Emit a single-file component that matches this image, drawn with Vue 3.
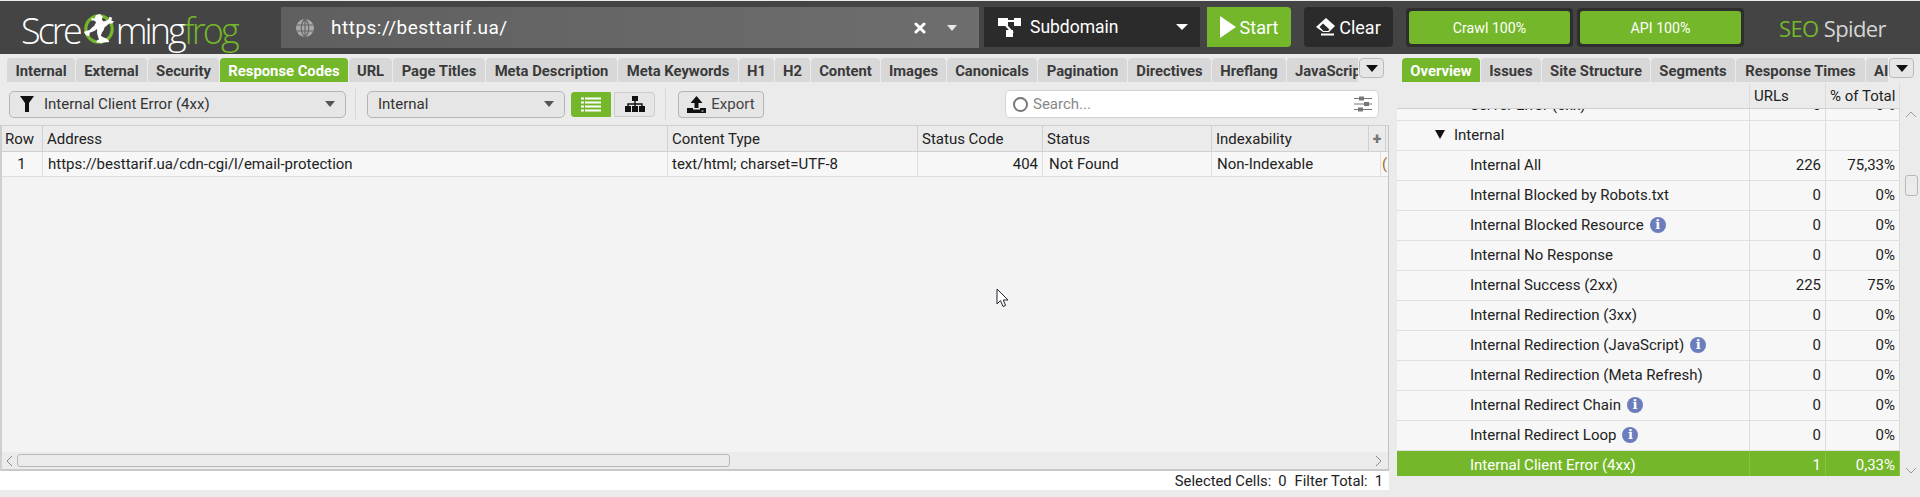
<script setup>
const leftTabs = [
  ['Internal', 68], ['External', 71], ['Security', 71], ['Response Codes', 128], ['URL', 43], ['Page Titles', 92],
  ['Meta Description', 131], ['Meta Keywords', 120], ['H1', 35], ['H2', 35], ['Content', 69], ['Images', 65],
  ['Canonicals', 90], ['Pagination', 89], ['Directives', 83], ['Hreflang', 74], ['JavaScript', 80]
]
const rightTabs = [
  ['Overview', 78], ['Issues', 60], ['Site Structure', 108], ['Segments', 84], ['Response Times', 129], ['AI', 40]
]
const clipped = ['JavaScript', 'AI']
const rows = [
  { name: 'Server Error (5xx)', urls: '0', pct: '0%', indent: 'leaf' },
  { name: 'Internal', urls: '', pct: '', indent: 'group' },
  { name: 'Internal All', urls: '226', pct: '75,33%', indent: 'leaf' },
  { name: 'Internal Blocked by Robots.txt', urls: '0', pct: '0%', indent: 'leaf' },
  { name: 'Internal Blocked Resource', urls: '0', pct: '0%', indent: 'leaf', info: true },
  { name: 'Internal No Response', urls: '0', pct: '0%', indent: 'leaf' },
  { name: 'Internal Success (2xx)', urls: '225', pct: '75%', indent: 'leaf' },
  { name: 'Internal Redirection (3xx)', urls: '0', pct: '0%', indent: 'leaf' },
  { name: 'Internal Redirection (JavaScript)', urls: '0', pct: '0%', indent: 'leaf', info: true },
  { name: 'Internal Redirection (Meta Refresh)', urls: '0', pct: '0%', indent: 'leaf' },
  { name: 'Internal Redirect Chain', urls: '0', pct: '0%', indent: 'leaf', info: true },
  { name: 'Internal Redirect Loop', urls: '0', pct: '0%', indent: 'leaf', info: true },
  { name: 'Internal Client Error (4xx)', urls: '1', pct: '0,33%', indent: 'leaf', active: true }
]
</script>

<template>
  <div class="app">
    <header class="top">
      <div class="logo">
        <span>Scre</span>
        <svg class="frog" viewBox="0 0 34 36" width="32" height="34">
          <circle cx="17" cy="17" r="14" fill="none" stroke="#74b72a" stroke-width="3.4" />
          <path fill="#fff" d="M14 2l4-1 3 3-1 3 2 2 5-2 1-3 3 1-1 3 3 1-2 2-3 0-5 4-1 3-2 3-1 3 3 2 3 1 3 3-1 1-5 0-2 1-6-1 1-2 2-1-2-6 0-5-3 2-5 2 0 3-3 0-2-2-1-2 2-1 4-1 5-5 2-3-2-2-3 0 0-3 3 1z" />
          <circle cx="11" cy="13" r="1.2" fill="#444" />
        </svg>
        <span>ming</span><span class="logo-green">frog</span>
      </div>
      <div class="url">
        <svg class="globe" viewBox="0 0 20 20" width="20" height="20">
          <circle cx="10" cy="10" r="9" fill="#a9a9a9" />
          <path d="M1 7h18M1 13h18M10 1v18M10 1C5 6 5 14 10 19M10 1c5 5 5 13 0 18" stroke="#666" stroke-width="1.2" fill="none" />
        </svg>
        <span class="url-text">https://besttarif.ua/</span>
        <svg class="url-x" viewBox="0 0 12 12" width="12" height="12"><path d="M2 2l8 8M10 2l-8 8" stroke="#fff" stroke-width="3" stroke-linecap="round" /></svg>
        <i class="caret caret-light"></i>
      </div>
      <div class="mode">
        <svg viewBox="0 0 24 19" width="24" height="19">
          <path d="M6 3h14M5 4l10 11" stroke="#fff" stroke-width="2" />
          <rect x="0" y="0" width="10" height="8" fill="#fff" /><rect x="16" y="0" width="7" height="8" fill="#fff" /><rect x="8" y="12" width="7" height="7" fill="#fff" />
        </svg>
        <span class="mode-label">Subdomain</span>
        <i class="caret caret-white"></i>
      </div>
      <button class="start">
        <svg viewBox="0 0 16 22" width="16" height="22"><path d="M0 0l16 11L0 22z" fill="#fff" /></svg>
        Start
      </button>
      <button class="clear">
        <svg viewBox="0 0 19 18" width="19" height="18"><path d="M10 0l9 8-6 6H7L0 9z" fill="#fff" /><path d="M3.5 9l3.5-3.5 6.5 6L12 13H7.5z" fill="#2b2b2b" /><path d="M5 16.5h13" stroke="#fff" stroke-width="2" /></svg>
        Clear
      </button>
      <div class="progress"><span>Crawl 100%</span></div>
      <div class="progress api"><span>API 100%</span></div>
      <div class="brand"><span class="brand-green">SEO</span> Spider</div>
    </header>

    <main class="main">
      <section class="left">
        <nav class="tabs">
          <div class="tab-list">
            <div v-for="t in leftTabs" :key="t[0]" class="tab" :class="{ on: t[0] === 'Response Codes', clip: clipped.includes(t[0]) }" :style="{ width: t[1] + 'px' }">{{ t[0] }}</div>
          </div>
          <button class="more"><i class="caret caret-black"></i></button>
        </nav>

        <div class="toolbar">
          <div class="select filter">
            <svg viewBox="0 0 14 16" width="14" height="16"><path d="M0 0h14L9 7v9H5V7z" fill="#111" /></svg>
            <span>Internal Client Error (4xx)</span>
            <i class="caret caret-gray"></i>
          </div>
          <div class="sep"></div>
          <div class="select scope">
            <span>Internal</span>
            <i class="caret caret-gray"></i>
          </div>
          <button class="view on">
            <svg viewBox="0 0 20 15" width="20" height="15">
              <path d="M0 1.5h3M4 1.5h16M0 5.5h3M4 5.5h16M0 9.5h3M4 9.5h16M0 13.5h3M4 13.5h16" stroke="#fff" stroke-width="2.2" />
            </svg>
          </button>
          <button class="view tree">
            <svg viewBox="0 0 20 16" width="20" height="16"><rect x="7" y="0" width="6" height="5" fill="#111" /><path d="M10 5v6M3 11V8h14v3" stroke="#111" stroke-width="1.4" fill="none" /><rect x="0" y="10" width="6" height="6" fill="#111" /><rect x="7" y="10" width="6" height="6" fill="#111" /><rect x="14" y="10" width="6" height="6" fill="#111" /></svg>
          </button>
          <div class="sep sep2"></div>
          <button class="export">
            <svg viewBox="0 0 19 17" width="19" height="17"><path d="M9.5 0l6 7h-4v5h-4V7h-4z" fill="#111" /><path d="M0 12h6v1.5h7V12h6v5H0z" fill="#111" /><rect x="14.5" y="14.5" width="2" height="1" fill="#ddd" /></svg>
            Export
          </button>
          <div class="search">
            <span class="search-ring"></span>
            <span class="search-text">Search...</span>
            <svg viewBox="0 0 18 16" width="18" height="16"><path d="M0 2.5h18M0 8h18M0 13.5h18" stroke="#777" stroke-width="1" /><rect x="5" y="0.5" width="5" height="4" fill="#777" /><rect x="10" y="6" width="5" height="4" fill="#777" /><rect x="4" y="11.5" width="5" height="4" fill="#777" /></svg>
          </div>
        </div>

        <div class="grid">
          <div class="grid-head">
            <div class="th c-row">Row</div>
            <div class="th c-addr">Address</div>
            <div class="th c-type">Content Type</div>
            <div class="th c-code">Status Code</div>
            <div class="th c-status">Status</div>
            <div class="th c-index">Indexability</div>
            <div class="th c-plus">+</div>
          </div>
          <div class="grid-row">
            <div class="td c-row center">1</div>
            <div class="td c-addr">https://besttarif.ua/cdn-cgi/l/email-protection</div>
            <div class="td c-type">text/html; charset=UTF-8</div>
            <div class="td c-code end">404</div>
            <div class="td c-status">Not Found</div>
            <div class="td c-index">Non-Indexable</div>
            <div class="td c-rest">(</div>
          </div>
          <div class="grid-empty">
            <svg class="cursor" viewBox="0 0 13 20" width="13" height="20"><path d="M1 1v15l3.5-3.5L7 18.5l2.6-1.1L7.2 12H12z" fill="#fff" stroke="#223" stroke-width="1" /></svg>
          </div>
          <div class="hscroll">
            <svg viewBox="0 0 7 12" width="7" height="12"><path d="M6 1L1 6l5 5" fill="none" stroke="#888" stroke-width="1" /></svg>
            <div class="hthumb"></div>
            <svg class="hend" viewBox="0 0 7 12" width="7" height="12"><path d="M1 1l5 5-5 5" fill="none" stroke="#888" stroke-width="1" /></svg>
          </div>
        </div>
        <footer class="status">
          <span>Selected Cells:</span><span>0</span><span class="gap">Filter Total:</span><span>1</span>
        </footer>
      </section>

      <aside class="side">
        <nav class="tabs rtabs">
          <div class="tab-list">
            <div v-for="t in rightTabs" :key="t[0]" class="tab" :class="{ on: t[0] === 'Overview', clip: clipped.includes(t[0]) }" :style="{ width: t[1] + 'px' }">{{ t[0] }}</div>
          </div>
          <button class="more"><i class="caret caret-black"></i></button>
        </nav>
        <div class="ov">
          <div class="ov-table">
            <div class="ov-head">
              <div class="ov-name"></div>
              <div class="ov-urls">URLs</div>
              <div class="ov-pct">% of Total</div>
            </div>
            <div class="ov-body">
              <div class="ov-scroll">
                <div v-for="r in rows" :key="r.name" class="ov-row" :class="{ active: r.active }">
                  <div class="ov-name" :class="r.indent">
                    <i v-if="r.indent === 'group'" class="tri"></i>
                    <span>{{ r.name }}</span>
                    <span v-if="r.info" class="info">i</span>
                  </div>
                  <div class="ov-urls num">{{ r.urls }}</div>
                  <div class="ov-pct num">{{ r.pct }}</div>
                </div>
              </div>
            </div>
          </div>
          <div class="vscroll">
            <svg class="chev-up" viewBox="0 0 12 7" width="12" height="7"><path d="M1 6l5-5 5 5" fill="none" stroke="#999" stroke-width="1" /></svg>
            <div class="vthumb"></div>
            <svg class="chev-down" viewBox="0 0 12 7" width="12" height="7"><path d="M1 1l5 5 5-5" fill="none" stroke="#999" stroke-width="1" /></svg>
          </div>
        </div>
      </aside>
    </main>
  </div>
</template>

<style>
html, body { margin: 0; background: #ebebeb; overflow: hidden; }
</style>

<style scoped>
.app { width: 1920px; height: 497px; display: flex; flex-direction: column; background: #ebebeb; font-family: Roboto, "Liberation Sans", sans-serif; color: #222; overflow: hidden; }
button { font-family: inherit; padding: 0; margin: 0; }
.caret { display: block; width: 0; height: 0; border-left: 6px solid transparent; border-right: 6px solid transparent; border-top: 6px solid #fff; }
.caret-light { border-top-color: #e8e8e8; margin-left: 21px; border-left-width: 5px; border-right-width: 5px; }
.caret-white { margin-left: auto; }
.caret-gray { border-top-color: #555; border-left-width: 5px; border-right-width: 5px; margin-left: auto; }
.caret-black { border-top-color: #111; border-left-width: 6px; border-right-width: 6px; border-top-width: 7px; }

.top { height: 53px; margin-top: 1px; flex: none; background: #444; display: flex; align-items: flex-start; position: relative; }
.logo { width: 281px; height: 48px; padding: 0 0 0 21px; box-sizing: border-box; display: flex; align-items: center; color: #fff; font-family: "Open Sans", sans-serif; font-weight: 300; font-size: 36px; letter-spacing: -2.95px; margin-top: 5px; }
.logo-green { color: #74b72a; }
.frog { flex: none; margin: 0 1px 0 3px; }
.url { margin-top: 6px; width: 698px; height: 41px; box-sizing: border-box; background: linear-gradient(90deg, #5f5f5f, #6e6e6e); display: flex; align-items: center; padding: 0 22px 0 14px; color: #fff; }
.globe { flex: none; }
.url-text { margin-left: 16px; font-size: 19px; letter-spacing: 0.5px; }
.url-x { margin-left: auto; }
.mode { margin: 6px 0 0 5px; width: 216px; height: 40px; box-sizing: border-box; background: #2b2b2b; color: #fff; display: flex; align-items: center; padding: 0 12px 0 14px; font-size: 17.5px; }
.mode-label { margin-left: 8px; }
.start { margin: 6px 0 0 7px; width: 84px; height: 40px; border: 0; background: #74b72a; border-radius: 0 4px 4px 0; color: #fff; display: flex; align-items: center; justify-content: center; gap: 4px; font-size: 18px; }
.clear { margin: 6px 0 0 13px; width: 89px; height: 40px; border: 0; background: #2b2b2b; border-radius: 4px; color: #fff; display: flex; align-items: center; justify-content: center; gap: 4px; font-size: 18px; }
.progress { margin: 7px 0 0 13px; width: 167px; height: 39px; box-sizing: border-box; background: #2e2e2e; border-radius: 4px; padding: 3px; }
.progress.api { margin-left: 4px; }
.progress span { display: flex; align-items: center; justify-content: center; height: 100%; background: #74b72a; border-radius: 3px; color: #fff; font-size: 14.2px; }
.brand { margin: 12px 0 0 35px; font-family: "Open Sans", sans-serif; font-weight: 400; font-size: 22px; letter-spacing: -0.6px; color: #d5d5d5; }
.brand-green { color: #74b72a; }

.main { flex: 1; display: flex; min-height: 0; padding-bottom: 7px; box-sizing: border-box; }
.left { width: 1389px; flex: none; display: flex; flex-direction: column; }
.side { width: 523px; margin-left: 8px; display: flex; flex-direction: column; }

.tabs { height: 24px; margin-top: 4px; padding-left: 7px; padding-right: 5px; box-sizing: border-box; display: flex; flex: none; position: relative; }
.tab-list { flex: 1; display: flex; gap: 1px; overflow: hidden; min-width: 0; }
.tab { flex: none; height: 24px; box-sizing: border-box; line-height: 26px; text-align: center; background: #d8d8d8; border-radius: 4px 4px 0 0; font-size: 14.8px; font-weight: 700; color: #3a3a3a; white-space: nowrap; overflow: hidden; }
.tab.clip { text-align: left; padding-left: 8px; }
.tab.on { background: #74b72a; color: #fff; }
.more { flex: none; width: 25px; height: 20px; margin: 0 0 0 1px; background: #e6e6e6; border: 1px solid #bbb; border-radius: 4px; display: flex; align-items: center; justify-content: center; }
.rtabs { padding-left: 5px; padding-right: 6px; }

.toolbar { height: 43px; flex: none; display: flex; align-items: center; box-sizing: border-box; padding-top: 1px; }
.select { height: 27px; box-sizing: border-box; border: 1px solid #b5b5b5; border-radius: 5px; background: #e6e6e6; display: flex; align-items: center; font-size: 15px; color: #333; padding: 0 10px 0 10px; }
.filter { width: 337px; margin-left: 9px; gap: 10px; }
.scope { width: 198px; }
.sep { width: 1px; height: 30px; background: #d8d8d8; margin: 0 11px 0 9px; }
.sep2 { margin: 0 12px 0 10px; }
.view { height: 25px; border: 1px solid #b5b5b5; box-sizing: border-box; display: flex; align-items: center; justify-content: center; }
.view.on { width: 40px; margin-left: 6px; border-radius: 3px 0 0 3px; background: #74b72a; border-color: #74b72a; }
.view.tree { width: 41px; margin-left: 3px; background: #e6e6e6; border-color: #cccccc; border-radius: 0 4px 4px 0; }
.export { width: 86px; height: 27px; background: #e6e6e6; border: 1px solid #b5b5b5; border-radius: 4px; display: flex; align-items: center; justify-content: center; gap: 5px; font-size: 15px; color: #444; }
.search { margin-left: 241px; width: 374px; height: 28px; box-sizing: border-box; background: #fff; border: 1px solid #d4d4d4; border-radius: 5px; display: flex; align-items: center; padding: 0 6px 0 7px; font-size: 15px; color: #888; }
.search-ring { width: 15px; height: 15px; box-sizing: border-box; border: 2px solid #777; border-radius: 50%; }
.search-text { margin-left: 5px; flex: 1; }

.grid { flex: 1; display: flex; flex-direction: column; min-height: 0; border-left: 2px solid #cfcfcf; border-right: 1px solid #c4c4c4; border-top: 1px solid #cfcfcf; }
.grid-head, .grid-row { display: flex; flex: none; }
.grid-head { height: 25px; background: #ebebeb; border-bottom: 1px solid #d0d0d0; }
.grid-row { height: 24px; background: #f7f7f7; border-bottom: 1px solid #dedede; }
.th, .td { box-sizing: border-box; height: 100%; font-size: 15px; color: #222; white-space: nowrap; overflow: hidden; display: flex; align-items: center; padding: 0 4px; }
.th { border-right: 1px solid #d0d0d0; }
.td { border-right: 1px solid #dedede; }
.c-row { width: 41px; padding-left: 3px; }
.c-addr { width: 625px; }
.td.c-addr { padding-left: 5px; }
.c-type { width: 250px; }
.c-code { width: 125px; }
.c-status { width: 169px; }
.td.c-status { padding-left: 6px; }
.c-index { width: 157px; }
.td.c-index { width: 169px; padding-left: 5px; }
.c-plus { width: 17px; justify-content: center; font-weight: 900; color: #777; font-size: 16px; padding: 0; border-right: 1px solid #d0d0d0; }
.c-rest { flex: 1; border-right: 0; padding: 0 0 0 1px; color: #a96a1e; }
.center { justify-content: center; }
.td.end { justify-content: flex-end; }
.grid-empty { flex: 1; background: #f3f3f3; position: relative; }
.cursor { position: absolute; left: 994px; top: 111px; }
.hscroll { flex: none; background: #ebebeb; border-bottom: 2px solid #c8c8c8; display: flex; align-items: center; padding-left: 4px; height: 17px; }
.hthumb { margin-left: 4px; width: 713px; height: 13px; box-sizing: border-box; background: #ebebeb; border: 1px solid #b8b8b8; border-radius: 3px; }
.hend { margin-left: auto; margin-right: 6px; }
.status { height: 19px; flex: none; background: #fff; display: flex; align-items: center; justify-content: flex-end; gap: 7px; padding-right: 6px; font-size: 14.8px; color: #222; }
.status .gap { margin-left: 1px; }

.ov { flex: 1; min-height: 0; display: flex; margin-top: 1px; margin-bottom: 14px; }
.ov-table { width: 503px; flex: none; display: flex; flex-direction: column; }
.ov-head { height: 25px; flex: none; display: flex; background: #ebebeb; border-bottom: 1px solid #cfcfcf; font-size: 15px; white-space: nowrap; }
.ov-head > div { display: flex; align-items: center; height: 100%; box-sizing: border-box; padding: 1px 0 0 4px; }
.ov-name { width: 353px; flex: none; box-sizing: border-box; border-right: 1px solid #dcdcdc; }
.ov-urls { width: 76px; flex: none; box-sizing: border-box; border-right: 1px solid #dcdcdc; }
.ov-pct { width: 74px; flex: none; box-sizing: border-box; border-right: 1px solid #dcdcdc; }
.ov-body { flex: 1; min-height: 0; overflow: hidden; }
.ov-scroll { margin-top: -18px; }
.ov-row { height: 30px; box-sizing: border-box; display: flex; background: #f7f7f7; border-bottom: 1px solid #e0e0e0; font-size: 15px; color: #222; }
.ov-row > div { height: 100%; display: flex; align-items: center; white-space: nowrap; padding-bottom: 2px; }
.ov-name.leaf { padding-left: 73px; }
.ov-name.group { padding-left: 38px; }
.tri { width: 0; height: 0; border-left: 5px solid transparent; border-right: 5px solid transparent; border-top: 9px solid #111; margin-right: 9px; }
.num { justify-content: flex-end; padding-right: 4px; }
.ov-row.active { background: #74b72a; color: #fff; border-bottom: 0; }
.ov-row.active > div { border-right-color: #86c340; }
.info { flex: none; margin-left: 6px; width: 16px; height: 16px; border-radius: 50%; background: #6b7dbd; color: #fff; font: 700 13px/16px "DejaVu Serif", serif; text-align: center; }
.vscroll { flex: 1; position: relative; background: #ebebeb; }
.chev-up { position: absolute; left: 5px; top: 28px; }
.vthumb { position: absolute; left: 5px; top: 92px; width: 13px; height: 21px; box-sizing: border-box; border: 1px solid #b8b8b8; border-radius: 3px; background: #ebebeb; }
.chev-down { position: absolute; left: 5px; top: 384px; }
</style>
